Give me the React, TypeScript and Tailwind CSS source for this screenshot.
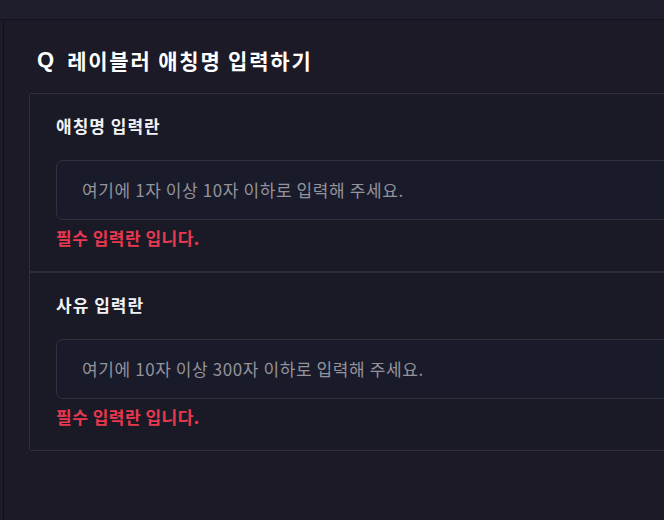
const FONT = "font-['Noto_Sans_CJK_KR','Noto_Sans',sans-serif]";

type Field = {
  label: string;
  placeholder: string;
};

const FIELDS: Field[] = [
  { label: "애칭명 입력란", placeholder: "여기에 1자 이상 10자 이하로 입력해 주세요." },
  { label: "사유 입력란", placeholder: "여기에 10자 이상 300자 이하로 입력해 주세요." },
];

function FieldSection({ field, last }: { field: Field; last: boolean }) {
  return (
    <div
      className={`px-[26px] pt-[20px] pb-[21px] ${last ? "" : "border-b-2 border-[#2c2c38]"}`}
    >
      <div className="text-[17px] leading-6 font-bold tracking-[1px] text-[#f2f2f4]">
        {field.label}
      </div>
      <div className="mt-[22px] flex h-[60px] items-center rounded-[7px] border border-[#32323e] bg-[#1a1b2a] pl-[25px]">
        <span className="text-[17px] tracking-[0.6px] text-[#93939c]">{field.placeholder}</span>
      </div>
      <div className="mt-[6px] text-[17px] leading-6 font-bold tracking-[0.5px] text-[#e8384f]">
        필수 입력란 입니다.
      </div>
    </div>
  );
}

export default function App() {
  return (
    <div className={`${FONT} flex h-[520px] w-[664px] flex-col overflow-hidden bg-[#1b1a26]`}>
      <div className="h-[20px] shrink-0 border-b border-[#15141e] bg-[#1f1e2d]" />
      <div className="flex min-h-0 flex-1">
        <div className="w-[4px] shrink-0 border-r border-[#0f0f16] bg-[#1b1a26]" />
        <div className="flex min-w-0 flex-1 flex-col pl-[25px] pt-[26px]">
          <h1 className="flex items-center gap-[13px] pl-[8px] text-[21px] leading-[28px] font-bold text-white">
            <span className="font-['Liberation_Sans',sans-serif] text-[22px]">Q</span>
            <span className="tracking-[1.8px]">레이블러 애칭명 입력하기</span>
          </h1>
          <div className="mt-[19px] w-[720px] shrink-0 rounded-[2px] border border-[#2f2f3b] bg-[#1a1a27]">
            {FIELDS.map((field, i) => (
              <FieldSection key={field.label} field={field} last={i === FIELDS.length - 1} />
            ))}
          </div>
        </div>
      </div>
    </div>
  );
}
